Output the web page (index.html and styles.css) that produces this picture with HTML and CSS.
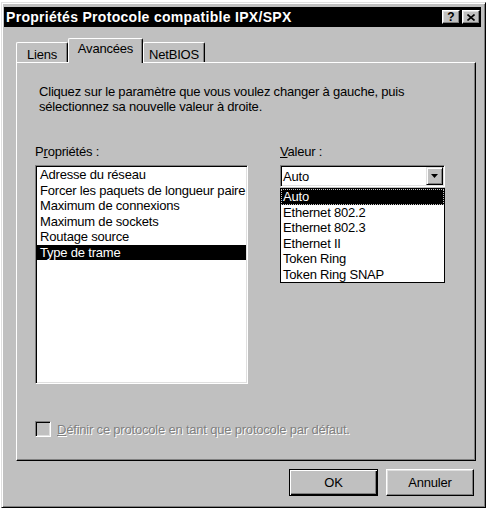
FILE: index.html
```html
<!DOCTYPE html>
<html lang="fr">
<head>
<meta charset="utf-8">
<title>Propriétés Protocole compatible IPX/SPX</title>
<link rel="stylesheet" href="styles.css">
</head>
<body>
<div class="window">
  <div class="titlebar">
    <span class="title">Propriétés Protocole compatible IPX/SPX</span>
    <div class="title-buttons">
      <span class="tbtn help">?</span>
      <span class="tbtn close"><svg width="8" height="7" viewBox="0 0 8 7"><path d="M0.5 0.5 L7.5 6.5 M7.5 0.5 L0.5 6.5" stroke="#000" stroke-width="1.6" fill="none"/></svg></span>
    </div>
  </div>
  <div class="body">
    <div class="tabs">
      <div class="tab tab-liens">Liens</div>
      <div class="tab tab-active">Avancées</div>
      <div class="tab tab-netbios">NetBIOS</div>
    </div>
    <div class="panel">
      <p class="desc">Cliquez sur le paramètre que vous voulez changer à gauche, puis<br>sélectionnez sa nouvelle valeur à droite.</p>
      <div class="fields">
        <div class="field">
          <div class="label">P<u>r</u>opriétés :</div>
          <ul class="listbox">
            <li>Adresse du réseau</li>
            <li>Forcer les paquets de longueur paire</li>
            <li>Maximum de connexions</li>
            <li>Maximum de sockets</li>
            <li>Routage source</li>
            <li class="selected">Type de trame</li>
          </ul>
        </div>
        <div class="field">
          <div class="label"><u>V</u>aleur :</div>
          <div class="combo-wrap">
            <div class="combo">
              <span class="combo-text">Auto</span>
              <span class="drop-btn"><svg width="7" height="4" viewBox="0 0 7 4"><path d="M0 0 H7 L3.5 4 Z" fill="#000"/></svg></span>
            </div>
            <ul class="dropdown">
              <li class="selected focus">Auto</li>
              <li>Ethernet 802.2</li>
              <li>Ethernet 802.3</li>
              <li>Ethernet II</li>
              <li>Token Ring</li>
              <li>Token Ring SNAP</li>
            </ul>
          </div>
        </div>
      </div>
      <div class="check-row">
        <span class="checkbox"></span>
        <span class="check-label"><u>D</u>éfinir ce protocole en tant que protocole par défaut.</span>
      </div>
    </div>
    <div class="footer">
      <button class="btn btn-ok">OK</button>
      <button class="btn btn-cancel">Annuler</button>
    </div>
  </div>
</div>
</body>
</html>
```
FILE: styles.css
```css
body {
  margin: 0;
  background: #ffffff;
  font-family: "Liberation Sans", Arial, sans-serif;
  font-size: 13px;
  letter-spacing: -0.2px;
  color: #000;
}

.window {
  box-sizing: border-box;
  width: 485px;
  height: 506px;
  margin: 2px 0 0 1px;
  padding: 4px 4px 0 2px;
  background: #c0c0c0;
  border: 1px solid;
  border-color: #dfdfdf #000 #000 #dfdfdf;
  box-shadow: inset 1px 1px #fff, inset -1px -1px #808080;
  display: flex;
  flex-direction: column;
}

.titlebar {
  height: 20px;
  background: #000;
  color: #fff;
  display: flex;
  align-items: center;
  justify-content: space-between;
  padding-left: 2px;
}

.title {
  font-weight: bold;
  font-size: 14px;
  letter-spacing: 0.3px;
  line-height: 20px;
}

.title-buttons {
  display: flex;
  gap: 2px;
  margin-right: 1px;
}

.tbtn {
  box-sizing: border-box;
  width: 18px;
  height: 14px;
  background: #c0c0c0;
  border: 1px solid;
  border-color: #fff #000 #000 #fff;
  box-shadow: inset -1px -1px #808080, inset 1px 1px #dfdfdf;
  display: flex;
  align-items: center;
  justify-content: center;
  color: #000;
}

.help {
  font-weight: bold;
  font-size: 12px;
  line-height: 12px;
  letter-spacing: 0;
}

.body {
  margin: 0 5px 0 12px;
  display: flex;
  flex-direction: column;
}

.tabs {
  display: flex;
  align-items: flex-end;
  height: 25px;
  margin-top: 11px;
  margin-bottom: -1px;
  position: relative;
  z-index: 2;
}

.tab {
  box-sizing: border-box;
  height: 20px;
  margin-bottom: 1px;
  padding-top: 4px;
  line-height: 15px;
  text-align: center;
  background: #c0c0c0;
  border-top: 1px solid #fff;
  border-left: 1px solid #fff;
  border-right: 1px solid #000;
  border-radius: 2px 2px 0 0;
  box-shadow: inset -1px 0 #808080;
}

.tab-liens { width: 52px; }
.tab-netbios { width: 62px; }

.tab-active {
  width: 75px;
  height: 25px;
  margin-bottom: 0;
  padding-top: 2px;
}

.panel {
  box-sizing: border-box;
  height: 399px;
  padding: 21px 0 0 18px;
  background: #c0c0c0;
  border: 1px solid;
  border-color: #fff #000 #000 #fff;
  box-shadow: inset -1px -1px #808080;
  display: flex;
  flex-direction: column;
}

.desc {
  margin: 0 0 0 4px;
  line-height: 15px;
}

.fields {
  margin-top: 30px;
  display: grid;
  grid-template-columns: 213px 165px;
  column-gap: 32px;
}

.label {
  line-height: 15px;
  margin-bottom: 6px;
}

.listbox, .dropdown {
  list-style: none;
  margin: 0;
  background: #fff;
}

.listbox {
  box-sizing: border-box;
  height: 219px;
  padding: 1px;
  border: 1px solid;
  border-color: #808080 #fff #fff #808080;
  box-shadow: inset 1px 1px #000, inset -1px -1px #dfdfdf;
  overflow: hidden;
}

.listbox li {
  line-height: 15.5px;
  padding-left: 3px;
  white-space: nowrap;
}

.selected {
  background: #000;
  color: #fff;
}

.combo-wrap {
  position: relative;
}

.combo {
  box-sizing: border-box;
  height: 22px;
  padding: 1px 1px 1px 2px;
  background: #fff;
  border: 1px solid;
  border-color: #808080 #fff #fff #808080;
  box-shadow: inset 1px 1px #000, inset -1px -1px #dfdfdf;
  display: flex;
  align-items: center;
  justify-content: space-between;
}

.combo-text {
  line-height: 15px;
}

.drop-btn {
  box-sizing: border-box;
  width: 17px;
  height: 18px;
  background: #c0c0c0;
  border: 1px solid;
  border-color: #dfdfdf #000 #000 #dfdfdf;
  box-shadow: inset 1px 1px #fff, inset -1px -1px #808080;
  display: flex;
  align-items: center;
  justify-content: center;
}

.dropdown {
  position: absolute;
  top: 23px;
  left: 0;
  width: 165px;
  box-sizing: border-box;
  padding: 0;
  border: 1px solid #000;
  z-index: 3;
}

.dropdown li {
  line-height: 15.5px;
  padding-left: 2px;
  white-space: nowrap;
}

.dropdown li.focus {
  outline: 1px dotted #c0c0c0;
  outline-offset: -1px;
}

.check-row {
  margin-top: 37px;
  display: flex;
  align-items: center;
  gap: 6px;
}

.checkbox {
  box-sizing: border-box;
  width: 16px;
  height: 16px;
  background: #c0c0c0;
  border: 1px solid;
  border-color: #808080 #fff #fff #808080;
  box-shadow: inset 1px 1px #000, inset -1px -1px #dfdfdf;
}

.check-label {
  color: #808080;
  text-shadow: 1px 1px 0 #fff;
  line-height: 15px;
}

.footer {
  margin-top: 8px;
  padding-right: 2px;
  display: flex;
  justify-content: flex-end;
  gap: 8px;
}

.btn {
  box-sizing: border-box;
  height: 27px;
  padding: 0;
  font: inherit;
  letter-spacing: inherit;
  color: #000;
  background: #c0c0c0;
  border: 1px solid;
  border-color: #fff #000 #000 #fff;
  box-shadow: inset -1px -1px #808080, inset 1px 1px #dfdfdf;
  text-align: center;
}

.btn-ok {
  width: 89px;
  border-color: #000;
  box-shadow: inset 1px 1px #fff, inset -1px -1px #000, inset -2px -2px #808080;
}

.btn-cancel {
  width: 88px;
}
```
